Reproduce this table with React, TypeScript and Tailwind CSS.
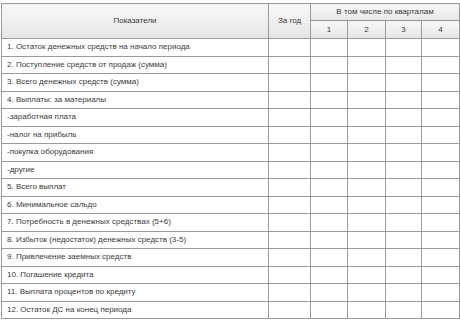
const rows = [
  "1. Остаток денежных средств на начало периода",
  "2. Поступление средств от продаж (сумма)",
  "3. Всего денежных средств (сумма)",
  "4. Выплаты: за материалы",
  "-заработная плата",
  "-налог на прибыль",
  "-покупка оборудования",
  "-другие",
  "5. Всего выплат",
  "6. Минимальное сальдо",
  "7. Потребность в денежных средствах (5+6)",
  "8. Избыток (недостаток) денежных средств (3-5)",
  "9. Привлечение заемных средств",
  "10. Погашение кредита",
  "11. Выплата процентов по кредиту",
  "12. Остаток ДС на конец периода",
];

const head = "border border-[#9a9a9a] bg-gradient-to-b from-[#f8f8f8] to-[#e6e6e6] font-normal text-center";
const cell = "border border-[#9a9a9a]";

export default function App() {
  return (
    <div className="w-[460px] h-[320px] bg-white pl-px pt-[3px]" style={{ fontFamily: '"Liberation Sans", Arial, sans-serif' }}>
      <table className="border-collapse table-fixed w-[459px] text-[8px] text-[#3a3a3a] leading-none">
        <colgroup>
          <col className="w-[267px]" />
          <col className="w-[42px]" />
          <col className="w-[37px]" />
          <col className="w-[38px]" />
          <col className="w-[36px]" />
          <col className="w-[38px]" />
        </colgroup>
        <thead>
          <tr className="h-[17px]">
            <th rowSpan={2} className={head}>Показатели</th>
            <th rowSpan={2} className={head}>За год</th>
            <th colSpan={4} className={head}>В том числе по кварталам</th>
          </tr>
          <tr className="h-[18px]">
            <th className={head}>1</th>
            <th className={head}>2</th>
            <th className={head}>3</th>
            <th className={head}>4</th>
          </tr>
        </thead>
        <tbody>
          {rows.map((r) => (
            <tr key={r} className="h-[17.5px]">
              <td className={`${cell} pl-[5px] whitespace-nowrap`}>{r}</td>
              <td className={cell}></td>
              <td className={cell}></td>
              <td className={cell}></td>
              <td className={cell}></td>
              <td className={cell}></td>
            </tr>
          ))}
        </tbody>
      </table>
    </div>
  );
}
